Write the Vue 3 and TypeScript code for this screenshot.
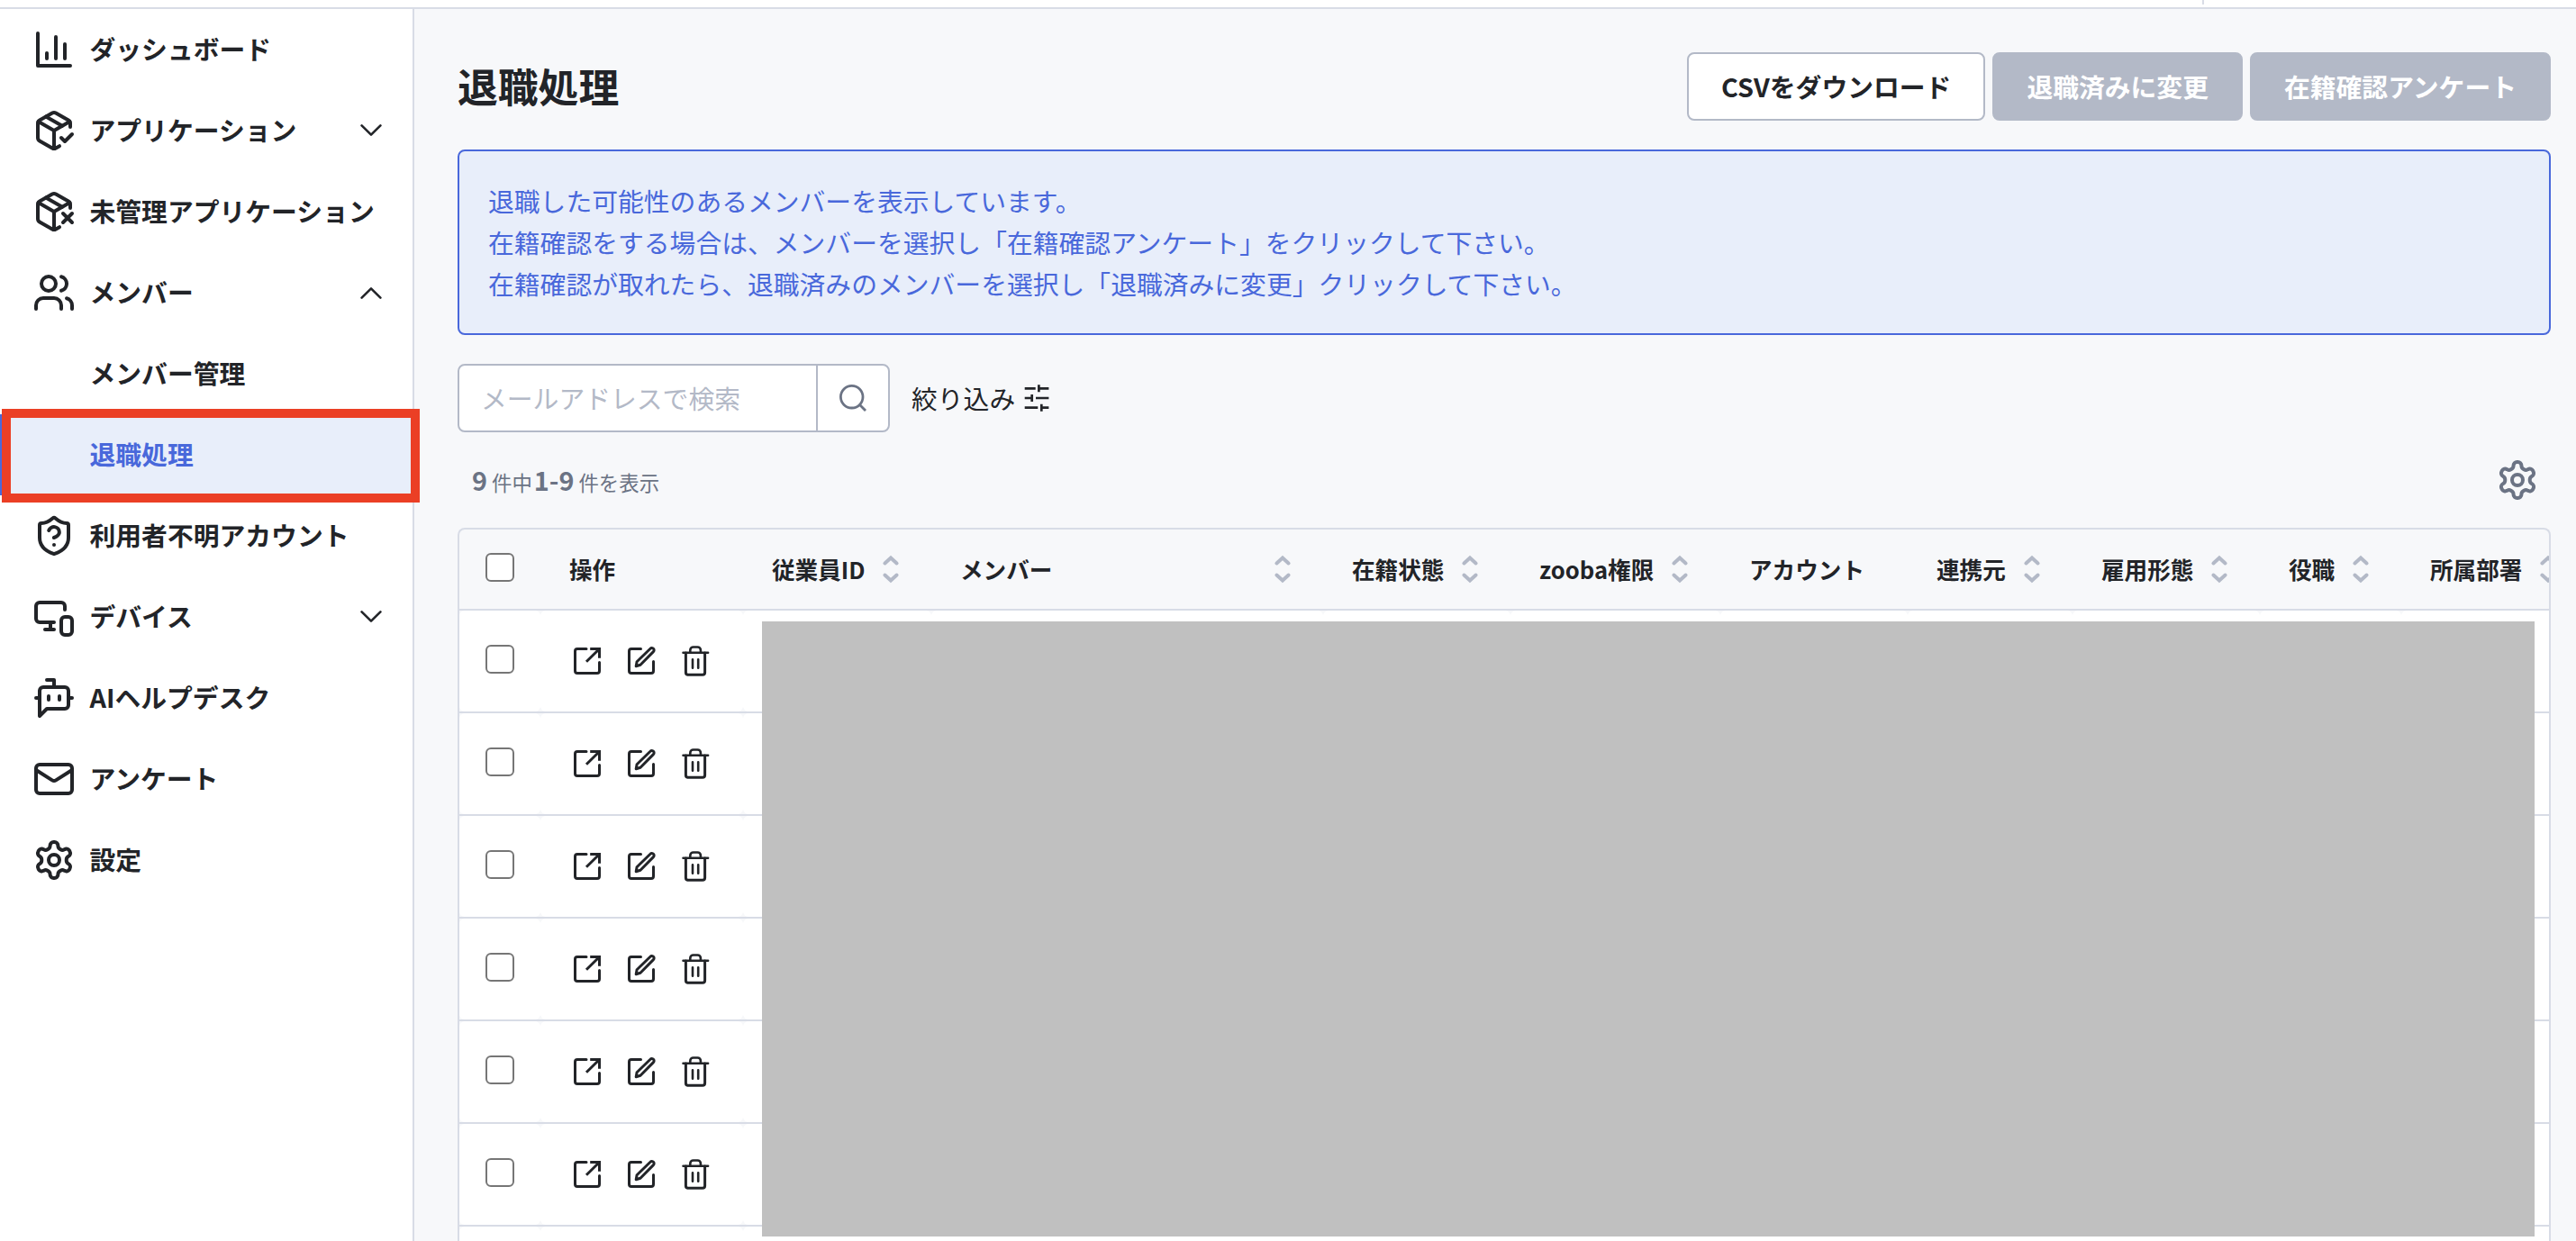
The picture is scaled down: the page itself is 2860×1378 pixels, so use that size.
<script setup lang="ts">
interface NavItem {
  label: string
  icon?: string
  chevron?: 'down' | 'up'
  active?: boolean
}

interface Column {
  label: string
  width: number
  sortable: boolean
}

const icons: Record<string, string> = {
  chart: '<path d="M3 3v18h18"/><path d="M18 17V9"/><path d="M13 17V5"/><path d="M8 17v-3"/>',
  packageCheck:
    '<path d="m16 16 2 2 4-4"/><path d="M21 10V8a2 2 0 0 0-1-1.73l-7-4a2 2 0 0 0-2 0l-7 4A2 2 0 0 0 3 8v8a2 2 0 0 0 1 1.73l7 4a2 2 0 0 0 2 0l2-1.14"/><path d="m7.5 4.27 9 5.15"/><path d="M3.29 7 12 12l8.71-5"/><path d="M12 22V12"/>',
  packageX:
    '<path d="M21 10V8a2 2 0 0 0-1-1.73l-7-4a2 2 0 0 0-2 0l-7 4A2 2 0 0 0 3 8v8a2 2 0 0 0 1 1.73l7 4a2 2 0 0 0 2 0l2-1.14"/><path d="m7.5 4.27 9 5.15"/><path d="M3.29 7 12 12l8.71-5"/><path d="M12 22V12"/><path d="m17 13 5 5m-5 0 5-5"/>',
  users:
    '<path d="M16 21v-2a4 4 0 0 0-4-4H6a4 4 0 0 0-4 4v2"/><circle cx="9" cy="7" r="4"/><path d="M22 21v-2a4 4 0 0 0-3-3.87"/><path d="M16 3.13a4 4 0 0 1 0 7.75"/>',
  shield:
    '<path d="M20 13c0 5-3.5 7.5-7.66 8.95a1 1 0 0 1-.67-.01C7.5 20.5 4 18 4 13V6a1 1 0 0 1 1-1c2 0 4.5-1.2 6.24-2.72a1.17 1.17 0 0 1 1.52 0C14.51 3.81 17 5 19 5a1 1 0 0 1 1 1z"/><path d="M9.1 9a3 3 0 0 1 5.82 1c0 2-3 3-3 3"/><path d="M12 17h.01"/>',
  devices:
    '<path d="M18 8V6a2 2 0 0 0-2-2H4a2 2 0 0 0-2 2v7a2 2 0 0 0 2 2h8"/><path d="M10 19v-3.96 3.15"/><path d="M7 19h5"/><rect width="6" height="10" x="16" y="12" rx="2"/>',
  bot: '<path d="M12 6V2H8"/><path d="m8 18-4 4V8a2 2 0 0 1 2-2h12a2 2 0 0 1 2 2v8a2 2 0 0 1-2 2Z"/><path d="M2 12h2"/><path d="M9 11v2"/><path d="M15 11v2"/><path d="M20 12h2"/>',
  mail: '<rect width="20" height="16" x="2" y="4" rx="2"/><path d="m22 7-8.97 5.7a1.94 1.94 0 0 1-2.06 0L2 7"/>',
  gear: '<path d="M12.22 2h-.44a2 2 0 0 0-2 2v.18a2 2 0 0 1-1 1.73l-.43.25a2 2 0 0 1-2 0l-.15-.08a2 2 0 0 0-2.73.73l-.22.38a2 2 0 0 0 .73 2.73l.15.1a2 2 0 0 1 1 1.72v.51a2 2 0 0 1-1 1.74l-.15.09a2 2 0 0 0-.73 2.73l.22.38a2 2 0 0 0 2.73.73l.15-.08a2 2 0 0 1 2 0l.43.25a2 2 0 0 1 1 1.73V20a2 2 0 0 0 2 2h.44a2 2 0 0 0 2-2v-.18a2 2 0 0 1 1-1.73l.43-.25a2 2 0 0 1 2 0l.15.08a2 2 0 0 0 2.73-.73l.22-.39a2 2 0 0 0-.73-2.73l-.15-.08a2 2 0 0 1-1-1.74v-.5a2 2 0 0 1 1-1.74l.15-.09a2 2 0 0 0 .73-2.73l-.22-.38a2 2 0 0 0-2.73-.73l-.15.08a2 2 0 0 1-2 0l-.43-.25a2 2 0 0 1-1-1.73V4a2 2 0 0 0-2-2z"/><circle cx="12" cy="12" r="3"/>',
}

const nav: NavItem[] = [
  { label: 'ダッシュボード', icon: 'chart' },
  { label: 'アプリケーション', icon: 'packageCheck', chevron: 'down' },
  { label: '未管理アプリケーション', icon: 'packageX' },
  { label: 'メンバー', icon: 'users', chevron: 'up' },
  { label: 'メンバー管理' },
  { label: '退職処理', active: true },
  { label: '利用者不明アカウント', icon: 'shield' },
  { label: 'デバイス', icon: 'devices', chevron: 'down' },
  { label: 'AIヘルプデスク', icon: 'bot' },
  { label: 'アンケート', icon: 'mail' },
  { label: '設定', icon: 'gear' },
]

const columns: Column[] = [
  { label: '操作', width: 225, sortable: false },
  { label: '従業員ID', width: 209, sortable: true },
  { label: 'メンバー', width: 435, sortable: true },
  { label: '在籍状態', width: 208, sortable: true },
  { label: 'zooba権限', width: 233, sortable: true },
  { label: 'アカウント', width: 208, sortable: false },
  { label: '連携元', width: 183, sortable: true },
  { label: '雇用形態', width: 208, sortable: true },
  { label: '役職', width: 157, sortable: true },
  { label: '所属部署', width: 208, sortable: true },
]

const rowCount = 7
</script>

<template>
  <div class="app">
    <header class="topbar"><span class="topbar-divider"></span></header>
    <div class="body">
      <nav class="sidebar">
        <a v-for="item in nav" :key="item.label" class="nav-item" :class="{ active: item.active }">
          <span class="nav-icon">
            <svg v-if="item.icon" viewBox="0 0 24 24" class="line-icon" v-html="icons[item.icon]"></svg>
          </span>
          <span class="nav-label">{{ item.label }}</span>
          <svg v-if="item.chevron" class="chevron" :class="item.chevron" viewBox="0 0 24 14">
            <path d="M1.6 1.4 12 11.6 22.4 1.4" />
          </svg>
          <span v-if="item.active" class="highlight"></span>
        </a>
      </nav>

      <main class="main">
        <div class="title-row">
          <h1>退職処理</h1>
          <div class="buttons">
            <button class="btn outline">CSVをダウンロード</button>
            <button class="btn disabled">退職済みに変更</button>
            <button class="btn disabled">在籍確認アンケート</button>
          </div>
        </div>

        <div class="alert">
          退職した可能性のあるメンバーを表示しています。<br />
          在籍確認をする場合は、メンバーを選択し「在籍確認アンケート」をクリックして下さい。<br />
          在籍確認が取れたら、退職済みのメンバーを選択し「退職済みに変更」クリックして下さい。
        </div>

        <div class="tools">
          <div class="search">
            <span class="placeholder">メールアドレスで検索</span>
            <span class="search-btn">
              <svg viewBox="0 0 30 30" width="30" height="30">
                <circle cx="13.7" cy="13.7" r="12.3" />
                <path d="M22.3 22.3 29 29" />
              </svg>
            </span>
          </div>
          <span class="filter">絞り込み</span>
          <svg class="tune" viewBox="0 0 32 32">
            <path d="M2.7 5.3h12M18.4 1.3v8M18.4 5.3h11M2.7 16h8M10.7 12v8M15 16h14.4M2.7 26.7h14.6M21.3 22.7v8M21.3 26.7h8.1" />
          </svg>
        </div>

        <div class="summary">
          <p><b>9</b> 件中 <b class="range">1-9</b> 件を表示</p>
          <svg viewBox="0 0 24 24" class="line-icon settings" v-html="icons.gear"></svg>
        </div>

        <section class="table">
          <div class="row head">
            <div class="cell check"><span class="checkbox"></span></div>
            <div v-for="col in columns" :key="col.label" class="cell" :style="{ width: col.width + 'px' }">
              <span>{{ col.label }}</span>
              <svg v-if="col.sortable" class="sort" viewBox="0 0 26 32">
                <path d="M6.4 9.4 13 3.4l6.6 6M6.4 22.6 13 28.6l6.6-6" />
              </svg>
            </div>
          </div>
          <div v-for="n in rowCount" :key="n" class="row">
            <div class="cell check"><span class="checkbox"></span></div>
            <div
              v-for="(col, i) in columns"
              :key="col.label"
              class="cell"
              :class="{ actions: i === 0 }"
              :style="{ width: col.width + 'px' }"
            >
              <template v-if="i === 0">
                <svg class="action" viewBox="0 0 32 34">
                  <path d="M15 3.5H5a2.5 2.5 0 0 0-2.5 2.5v22A2.5 2.5 0 0 0 5 30.5h22a2.5 2.5 0 0 0 2.5-2.5V18.6" />
                  <path class="square" d="M19.2 3.5h10.3v10.2M29 4 15 17.8" />
                </svg>
                <svg class="action" viewBox="0 0 32 34">
                  <path d="M15.5 3.5H5a2.5 2.5 0 0 0-2.5 2.5v22A2.5 2.5 0 0 0 5 30.5h22a2.5 2.5 0 0 0 2.5-2.5V17.6" />
                  <path d="m10.2 22.7.9-5L26 3.2a2.3 2.3 0 0 1 3.5.1 2.3 2.3 0 0 1-.1 3.3L15 21.2Z" />
                </svg>
                <svg class="action" viewBox="0 0 32 34">
                  <path class="thin" d="M2.5 7.7h27.6M10.3 7.7V4.9a3.4 3.4 0 0 1 3.4-3.4h4.8a3.4 3.4 0 0 1 3.4 3.4v2.8" />
                  <path d="M5.4 8v21.7A2.6 2.6 0 0 0 8 32.3h16a2.6 2.6 0 0 0 2.6-2.6V8" />
                  <path class="thin" d="M13 15.2v9.6M19.2 15.2v9.6" />
                </svg>
              </template>
            </div>
          </div>
          <div class="redaction"></div>
        </section>
      </main>
    </div>
  </div>
</template>

<style>
body {
  margin: 0;
}
</style>

<style scoped>
* {
  box-sizing: border-box;
}
.app {
  width: 2860px;
  height: 1378px;
  overflow: hidden;
  display: flex;
  flex-direction: column;
  background: #f7f8fa;
  color: #222428;
  font-family: 'Noto Sans CJK JP', 'Noto Sans', sans-serif;
  font-size: 28.8px;
}
.topbar {
  flex: none;
  height: 10px;
  background: #fff;
  border-bottom: 2px solid #d8dce6;
  padding-left: 2445px;
  display: flex;
}
.topbar-divider {
  width: 2px;
  height: 5px;
  background: #d8dce6;
}
.body {
  flex: 1;
  min-height: 0;
  display: flex;
}
.sidebar {
  flex: none;
  width: 460px;
  background: #fff;
  border-right: 2px solid #d8dce6;
}
.nav-item {
  position: relative;
  display: flex;
  align-items: center;
  height: 90px;
  padding: 0 34px 0 36px;
  font-weight: 700;
  white-space: nowrap;
}
.nav-icon {
  flex: none;
  width: 48px;
  height: 48px;
  margin-right: 15.5px;
}
.nav-label {
  flex: 1;
  line-height: 42px;
  padding-bottom: 2px;
}
.line-icon {
  display: block;
  width: 48px;
  height: 48px;
  fill: none;
  stroke: currentColor;
  stroke-width: 2;
  stroke-linecap: round;
  stroke-linejoin: round;
}
.chevron {
  width: 24px;
  height: 14px;
  fill: none;
  stroke: currentColor;
  stroke-width: 2.6;
  stroke-linecap: round;
  stroke-linejoin: round;
}
.chevron.up {
  transform: rotate(180deg);
}
.nav-item.active {
  background: #e8eefa;
  color: #4968db;
}
.nav-item.active::before {
  content: '';
  position: absolute;
  left: 0;
  top: 0;
  width: 6px;
  height: 90px;
  background: #4968db;
}
.highlight {
  position: absolute;
  z-index: 2;
  left: 2px;
  top: -6px;
  width: 464px;
  height: 104px;
  border: 10px solid #eb3f25;
}
.main {
  flex: 1;
  min-width: 0;
  padding: 48px 28px 0 48px;
  display: flex;
  flex-direction: column;
}
.title-row {
  display: flex;
  justify-content: space-between;
  align-items: center;
  height: 76px;
  margin-bottom: 32px;
}
h1 {
  margin: 0;
  padding-bottom: 2px;
  font-size: 44.8px;
  line-height: 64px;
  font-weight: 700;
}
.buttons {
  display: flex;
  gap: 8px;
}
.btn {
  height: 76px;
  padding: 0 36px 2px;
  border: 2px solid #b3b9c7;
  border-radius: 8px;
  background: #b3b9c7;
  color: #fff;
  font: inherit;
  font-weight: 700;
  white-space: nowrap;
}
.btn.outline {
  background: #fff;
  color: #222428;
}
.alert {
  flex: none;
  height: 206px;
  margin-bottom: 32px;
  padding: 32px;
  border: 2px solid #4968db;
  border-radius: 8px;
  background: #e8eefa;
  color: #4968db;
  line-height: 46px;
}
.tools {
  display: flex;
  align-items: center;
  height: 76px;
}
.search {
  display: flex;
  width: 480px;
  height: 76px;
  border: 2px solid #b3b9c7;
  border-radius: 8px;
  background: #fff;
}
.placeholder {
  flex: 1;
  padding-left: 24px;
  line-height: 71px;
  color: #b3b9c7;
}
.search-btn {
  width: 80px;
  border-left: 2px solid #b3b9c7;
  display: flex;
  align-items: center;
  justify-content: center;
}
.search-btn svg {
  fill: none;
  stroke: #6b7384;
  stroke-width: 2.8;
}
.filter {
  margin-left: 24px;
  padding-bottom: 2px;
}
.tune {
  width: 32px;
  height: 32px;
  margin-left: 8px;
  fill: none;
  stroke: #222428;
  stroke-width: 2.7;
}
.summary {
  display: flex;
  justify-content: space-between;
  align-items: center;
  height: 106px;
  padding: 0 13px 0 16px;
  color: #6b7384;
}
.summary p {
  margin: 0;
  padding-bottom: 2px;
  font-size: 22.4px;
}
.summary b {
  font-size: 28.8px;
}
.summary .range {
  margin-left: -3px;
}
.table {
  position: relative;
  flex: 1;
  min-height: 0;
  border: 2px solid #d8dce6;
  border-bottom: 0;
  border-radius: 8px 8px 0 0;
  overflow: hidden;
}
.row {
  display: flex;
  width: max-content;
  height: 114px;
  border-bottom: 2px solid #d8dce6;
}
.cell {
  flex: none;
  display: flex;
  align-items: center;
  justify-content: space-between;
  padding: 0 32px;
  background: #fff;
  border-radius: 6px;
  white-space: nowrap;
}
.cell.check {
  width: 90px;
  padding: 0 0 4px 29px;
}
.head {
  height: 90px;
  font-size: 25.6px;
  font-weight: 700;
}
.head .cell {
  background: transparent;
}
.head .cell > span:not(.checkbox) {
  padding-bottom: 1px;
}
.checkbox {
  width: 32px;
  height: 32px;
  border: 2px solid #767676;
  border-radius: 6px;
  background: #fff;
}
.sort {
  width: 26px;
  height: 32px;
  fill: none;
  stroke: #b3b9c7;
  stroke-width: 4;
  stroke-linecap: round;
}
.actions {
  justify-content: flex-start;
  gap: 28px;
  padding-left: 36px;
}
.action {
  width: 32px;
  height: 34px;
  overflow: visible;
  fill: none;
  stroke: #222428;
  stroke-width: 3;
  stroke-linecap: round;
  stroke-linejoin: round;
}
.action .square {
  stroke-linecap: butt;
  stroke-linejoin: miter;
}
.action .thin {
  stroke-width: 2.6;
}
.redaction {
  position: absolute;
  left: 336px;
  top: 102px;
  width: 1968px;
  height: 683px;
  background: #c0c0c0;
}
</style>
